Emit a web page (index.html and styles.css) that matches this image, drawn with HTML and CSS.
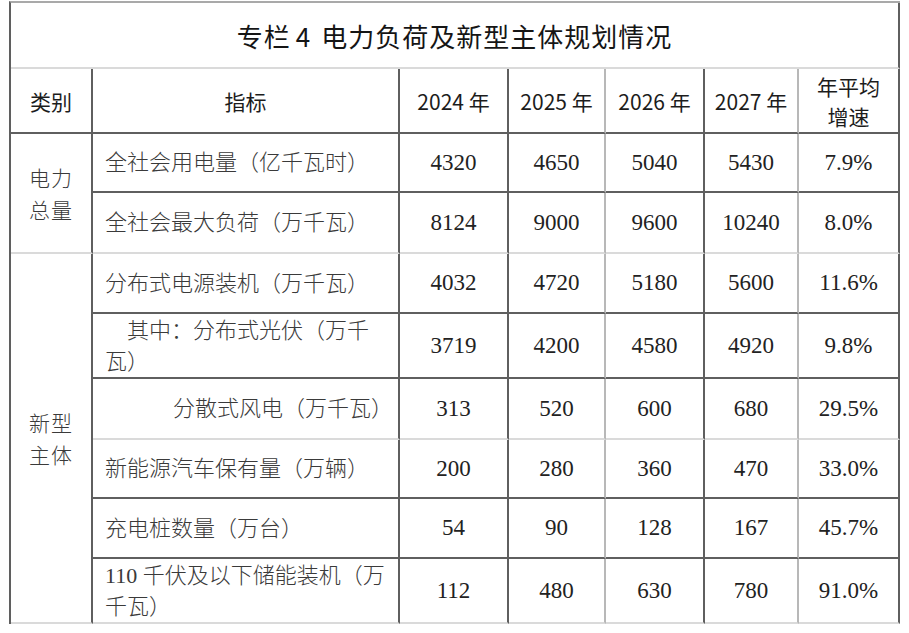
FILE: index.html
```html
<!DOCTYPE html>
<html lang="zh-CN">
<head>
<meta charset="utf-8">
<title>专栏 4 电力负荷及新型主体规划情况</title>
<link rel="stylesheet" href="styles.css">
</head>
<body>
<div class="sheet">
  <table class="plan">
    <colgroup>
      <col class="c-type">
      <col class="c-name">
      <col class="c-y24">
      <col class="c-y25">
      <col class="c-y26">
      <col class="c-y27">
      <col class="c-rate">
    </colgroup>
    <tr class="r-title">
      <th colspan="7" class="title soft-b">专栏<span class="no">4</span>电力负荷及新型主体规划情况</th>
    </tr>
    <tr class="r-head">
      <th>类别</th>
      <th>指标</th>
      <th>2024 年</th>
      <th class="soft-r">2025 年</th>
      <th>2026 年</th>
      <th class="soft-r">2027 年</th>
      <th class="two">年平均<br>增速</th>
    </tr>
    <tr class="r-59">
      <td rowspan="2" class="type soft-b">电力<br>总量</td>
      <td class="name">全社会用电量（亿千瓦时）</td>
      <td class="val">4320</td>
      <td class="val soft-r">4650</td>
      <td class="val">5040</td>
      <td class="val soft-r">5430</td>
      <td class="val">7.9%</td>
    </tr>
    <tr class="r-61">
      <td class="name soft-b">全社会最大负荷（万千瓦）</td>
      <td class="val soft-b">8124</td>
      <td class="val soft-r soft-b">9000</td>
      <td class="val soft-b">9600</td>
      <td class="val soft-r soft-b">10240</td>
      <td class="val soft-b">8.0%</td>
    </tr>
    <tr class="r-60">
      <td rowspan="6" class="type soft-b">新型<br>主体</td>
      <td class="name">分布式电源装机（万千瓦）</td>
      <td class="val">4032</td>
      <td class="val soft-r">4720</td>
      <td class="val">5180</td>
      <td class="val soft-r">5600</td>
      <td class="val">11.6%</td>
    </tr>
    <tr class="r-65">
      <td class="name indent">其中：分布式光伏（万千瓦）</td>
      <td class="val">3719</td>
      <td class="val soft-r">4200</td>
      <td class="val">4580</td>
      <td class="val soft-r">4920</td>
      <td class="val">9.8%</td>
    </tr>
    <tr class="r-61">
      <td class="name far soft-b">分散式风电（万千瓦）</td>
      <td class="val soft-b">313</td>
      <td class="val soft-r soft-b">520</td>
      <td class="val soft-b">600</td>
      <td class="val soft-r soft-b">680</td>
      <td class="val soft-b">29.5%</td>
    </tr>
    <tr class="r-59">
      <td class="name">新能源汽车保有量（万辆）</td>
      <td class="val">200</td>
      <td class="val soft-r">280</td>
      <td class="val">360</td>
      <td class="val soft-r">470</td>
      <td class="val">33.0%</td>
    </tr>
    <tr class="r-60">
      <td class="name">充电桩数量（万台）</td>
      <td class="val">54</td>
      <td class="val soft-r">90</td>
      <td class="val">128</td>
      <td class="val soft-r">167</td>
      <td class="val">45.7%</td>
    </tr>
    <tr class="r-65">
      <td class="name soft-b">110 千伏及以下储能装机（万千瓦）</td>
      <td class="val soft-b">112</td>
      <td class="val soft-r soft-b">480</td>
      <td class="val soft-b">630</td>
      <td class="val soft-r soft-b">780</td>
      <td class="val soft-b">91.0%</td>
    </tr>
  </table>
</div>
</body>
</html>
```

FILE: styles.css
```css
html, body {
  margin: 0;
  padding: 0;
  background: #ffffff;
}

.sheet {
  padding: 1px 0 0 9px;
}

.plan {
  table-layout: fixed;
  width: 891px;
  border-collapse: separate;
  border-spacing: 0;
  border-left: 2px solid #5f5f5f;
  border-top: 2px solid #a9a9a9;
  color: #2a2a2a;
}

.c-type { width: 82px; }
.c-name { width: 307px; }
.c-y24 { width: 109px; }
.c-y25 { width: 97px; }
.c-y26 { width: 99px; }
.c-y27 { width: 94px; }
.c-rate { width: 101px; }

.plan th,
.plan td {
  box-sizing: border-box;
  padding: 0;
  border-right: 2px solid #5f5f5f;
  border-bottom: 2px solid #5f5f5f;
  text-align: center;
  vertical-align: middle;
  font-weight: 400;
}

.plan .soft-r { border-right-color: #b8b8b8; }
.plan .soft-b { border-bottom-color: #dadada; }

.r-title { height: 66px; }
.r-head { height: 65px; }
.r-59 { height: 59px; }
.r-60 { height: 60px; }
.r-61 { height: 61px; }
.r-65 { height: 65px; }

.title {
  font-family: "Noto Sans CJK SC", sans-serif;
  font-size: 26px;
  color: #151515;
  letter-spacing: 1px;
}

.title .no {
  display: inline-block;
  margin: 0 10px 0 5px;
}

.r-head th {
  font-family: "Noto Sans CJK SC", sans-serif;
  font-size: 21px;
  color: #1c1c1c;
  line-height: 30px;
}

.type {
  font-family: "Noto Sans CJK SC", sans-serif;
  font-size: 21px;
  font-weight: 300;
  line-height: 32px;
  letter-spacing: 1px;
  color: #3a3a3a;
}

.plan td.type { font-weight: 300; }

.name {
  font-family: "Liberation Serif", "Noto Sans CJK SC", serif;
  font-size: 22px;
  line-height: 31px;
  color: #3a3a3a;
}

.plan td.name {
  text-align: left;
  padding: 0 9px 0 12px;
  font-weight: 300;
}

.plan td.indent { text-indent: 1em; }
.plan td.far { padding: 0 3px 0 80px; }

.val {
  font-family: "Liberation Serif", serif;
  font-size: 23px;
  color: #222222;
}
```
